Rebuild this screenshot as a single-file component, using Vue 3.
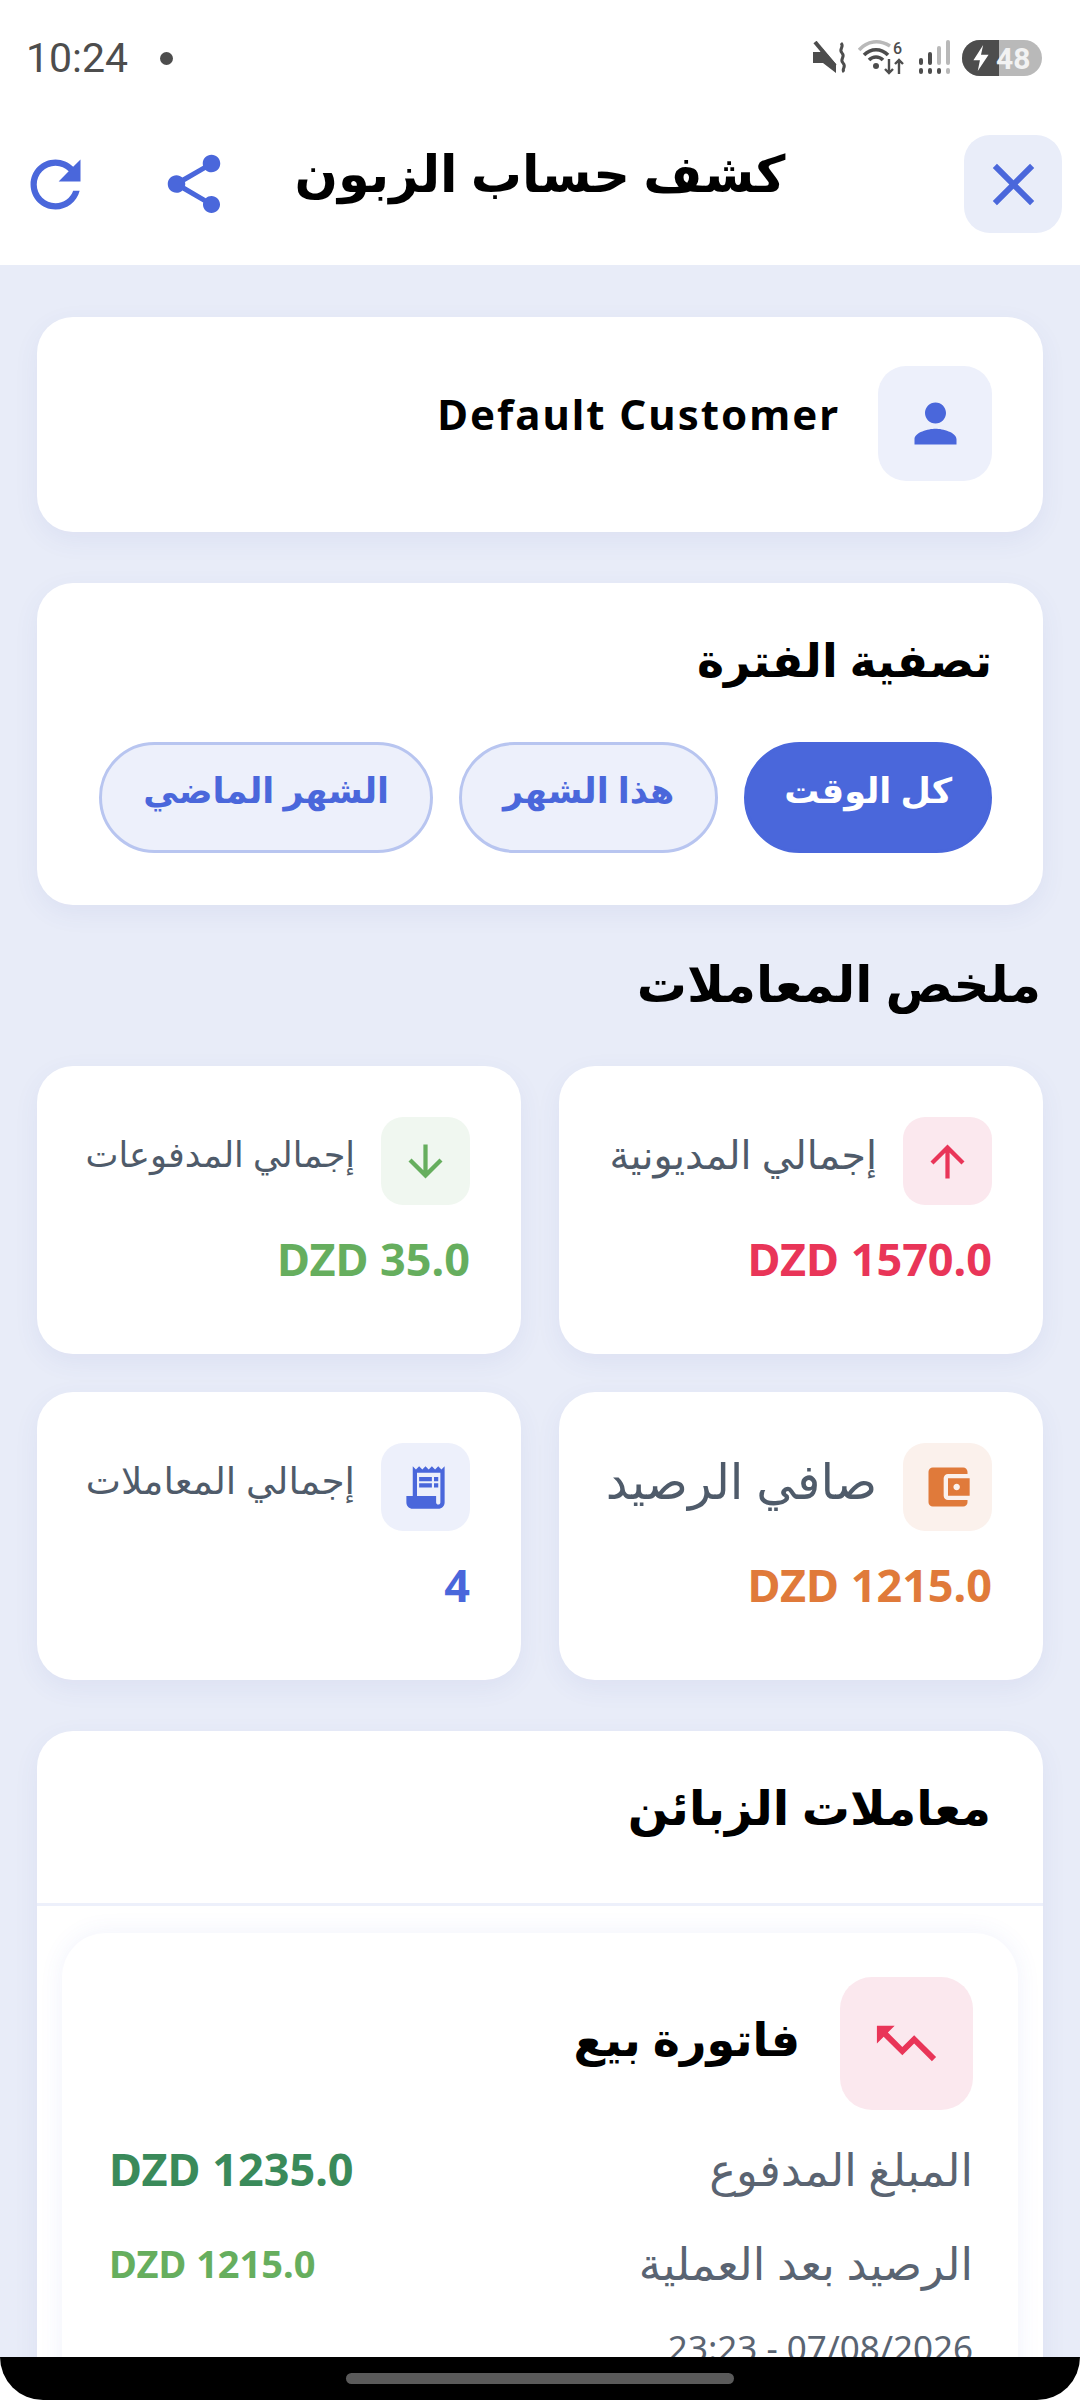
<template>
  <div class="screen" dir="rtl">
    <header class="top">
      <div class="status" dir="ltr">
        <div class="clock">
          <span>10:24</span>
          <i class="dot"></i>
        </div>
        <div class="status-icons">
          <svg width="36" height="34" viewBox="0 0 36 34" fill="#4d4d4d">
            <path d="M2 11h7l3-3 13 15v9L12 22H2z" />
            <path d="M4 1l20 24" stroke="#4d4d4d" stroke-width="4" />
            <path d="M30 2c4 4-3 6 1 10s-3 6 1 10-2 6 1 9" fill="none" stroke="#4d4d4d" stroke-width="3" />
          </svg>
          <svg width="50" height="38" viewBox="0 0 50 38" fill="none" stroke="#4d4d4d" stroke-width="3.6">
            <path d="M1 11C9 2 21 0 32 7" stroke="#b9b9b9" />
            <path d="M6 16c7-7 17-7 24 0M11 21c4-4 10-4 14 0" />
            <circle cx="18" cy="27" r="3" fill="#4d4d4d" stroke="none" />
            <path d="M31 20v14m-4-4 4 4 4-4M41 35V21m-4 4 4-4 4 4" stroke-width="2.4" />
            <text x="35" y="15" font-size="16" font-family="Roboto, sans-serif" font-weight="500" fill="#4d4d4d" stroke="none">6</text>
          </svg>
          <svg width="32" height="36" viewBox="0 0 32 36">
            <g fill="#4d4d4d">
              <rect x="0" y="18" width="4" height="7" rx="2" /><rect x="9" y="12" width="4" height="13" rx="2" />
              <rect x="0" y="28" width="4" height="6" rx="2" /><rect x="9" y="28" width="4" height="6" rx="2" /><rect x="18" y="28" width="4" height="6" rx="2" />
            </g>
            <g fill="#b9b9b9">
              <rect x="18" y="6" width="4" height="19" rx="2" /><rect x="27" y="0" width="4" height="25" rx="2" /><rect x="27" y="28" width="4" height="6" rx="2" />
            </g>
          </svg>
          <div class="battery">
            <div class="charge">
              <svg width="18" height="26" viewBox="0 0 16 24" fill="#fff"><path d="M10 0 1 14h6l-2 10 10-15H8z" /></svg>
            </div>
            <span>48</span>
          </div>
        </div>
      </div>
      <div class="appbar">
        <button class="close-btn">
          <svg width="71" height="71" viewBox="0 0 24 24"><path :d="icons.close" /></svg>
        </button>
        <h1>كشف حساب الزبون</h1>
        <div class="actions">
          <svg width="70" height="70" viewBox="0 0 24 24"><path :d="icons.share" /></svg>
          <svg width="75" height="75" viewBox="0 0 24 24"><path :d="icons.refresh" /></svg>
        </div>
      </div>
    </header>

    <main class="content">
      <section class="card customer">
        <div class="tile tile-lg blue">
          <svg width="63" height="63" viewBox="0 0 24 24"><path :d="icons.person" /></svg>
        </div>
        <div class="customer-name">Default Customer</div>
      </section>

      <section class="card filter">
        <h2>تصفية الفترة</h2>
        <div class="pills">
          <button v-for="(p, i) in periods" :key="p" class="pill" :class="{ active: i === 0 }">{{ p }}</button>
        </div>
      </section>

      <h2 class="section-title">ملخص المعاملات</h2>

      <div class="stats">
        <div v-for="s in stats" :key="s.label" class="card stat">
          <div class="stat-head">
            <div class="tile" :class="s.tone">
              <svg :width="s.size" :height="s.size" viewBox="0 0 24 24"><path :d="s.icon" /></svg>
            </div>
            <span class="stat-label" :style="{ fontSize: s.fit + 'px' }">{{ s.label }}</span>
          </div>
          <div class="stat-value" :class="s.tone" dir="ltr">{{ s.value }}</div>
        </div>
      </div>

      <section class="card history">
        <h2 class="history-title">معاملات الزبائن</h2>
        <div class="history-body">
          <article class="tx">
            <div class="tx-head">
              <div class="tile tile-xl red">
                <svg class="flip" width="71" height="71" viewBox="0 0 24 24"><path :d="icons.trending" /></svg>
              </div>
              <h3>فاتورة بيع</h3>
            </div>
            <div class="tx-row first">
              <span>المبلغ المدفوع</span>
              <b class="paid" dir="ltr">DZD 1235.0</b>
            </div>
            <div class="tx-row">
              <span>الرصيد بعد العملية</span>
              <b class="after" dir="ltr">DZD 1215.0</b>
            </div>
            <div class="tx-date" dir="ltr">23:23 - 07/08/2026</div>
          </article>
        </div>
      </section>
    </main>

    <div class="navbar">
      <div class="navbar-inner"><i></i></div>
    </div>
  </div>
</template>

<script setup>
const icons = {
  close: 'M19 6.41L17.59 5 12 10.59 6.41 5 5 6.41 10.59 12 5 17.59 6.41 19 12 13.41 17.59 19 19 17.59 13.41 12z',
  share: 'M18 16.08c-.76 0-1.44.3-1.96.77L8.91 12.7c.05-.23.09-.46.09-.7s-.04-.47-.09-.7l7.05-4.11c.54.5 1.25.81 2.04.81 1.66 0 3-1.34 3-3s-1.34-3-3-3-3 1.34-3 3c0 .24.04.47.09.7L8.04 9.81C7.5 9.31 6.79 9 6 9c-1.66 0-3 1.34-3 3s1.34 3 3 3c.79 0 1.5-.31 2.04-.81l7.12 4.16c-.05.21-.08.43-.08.65 0 1.61 1.31 2.92 2.92 2.92 1.61 0 2.92-1.31 2.92-2.92s-1.31-2.92-2.92-2.92z',
  refresh: 'M17.65 6.35C16.2 4.9 14.21 4 12 4c-4.42 0-7.99 3.58-7.99 8s3.57 8 7.99 8c3.73 0 6.84-2.55 7.73-6h-2.08c-.82 2.33-3.04 4-5.65 4-3.31 0-6-2.69-6-6s2.69-6 6-6c1.66 0 3.14.69 4.22 1.78L13 11h7V4l-2.35 2.35z',
  person: 'M12 12c2.21 0 4-1.79 4-4s-1.79-4-4-4-4 1.79-4 4 1.79 4 4 4zm0 2c-2.67 0-8 1.34-8 4v2h16v-2c0-2.66-5.33-4-8-4z',
  up: 'M4 12l1.41 1.41L11 7.83V20h2V7.83l5.58 5.59L20 12l-8-8-8 8z',
  down: 'M20 12l-1.41-1.41L13 16.17V4h-2v12.17l-5.58-5.59L4 12l8 8 8-8z',
  wallet: 'M21 18v1c0 1.1-.9 2-2 2H5c-1.11 0-2-.9-2-2V5c0-1.1.89-2 2-2h14c1.1 0 2 .9 2 2v1h-9c-1.11 0-2 .9-2 2v8c0 1.1.89 2 2 2h9zm-9-2h10V8H12v8zm4-2.5c-.83 0-1.5-.67-1.5-1.5s.67-1.5 1.5-1.5 1.5.67 1.5 1.5-.67 1.5-1.5 1.5z',
  receipt: 'M19.5 3.5L18 2l-1.5 1.5L15 2l-1.5 1.5L12 2l-1.5 1.5L9 2 7.5 3.5 6 2v14H3v3c0 1.66 1.34 3 3 3h12c1.66 0 3-1.34 3-3V2l-1.5 1.5zM19 19c0 .55-.45 1-1 1s-1-.45-1-1v-3H8V5h11v14zM9 7h6v2H9zm7 0h2v2h-2zm-7 3h6v2H9zm7 0h2v2h-2z',
  trending: 'M16 6l2.29 2.29-4.88 4.88-4-4L2 16.59 3.41 18l6-6 4 4 6.3-6.29L22 12V6z'
}

const periods = ['كل الوقت', 'هذا الشهر', 'الشهر الماضي']

// the labels are shrunk to fit one width, so each has its own font size
const stats = [
  { label: 'إجمالي المديونية', value: 'DZD 1570.0', tone: 'red', icon: icons.up, size: 51, fit: 39.5 },
  { label: 'إجمالي المدفوعات', value: 'DZD 35.0', tone: 'green', icon: icons.down, size: 51, fit: 35 },
  { label: 'صافي الرصيد', value: 'DZD 1215.0', tone: 'orange', icon: icons.wallet, size: 52, fit: 49 },
  { label: 'إجمالي المعاملات', value: '4', tone: 'blue', icon: icons.receipt, size: 51, fit: 37.4 }
]
</script>

<style>
html, body {
  margin: 0;
  background: #e8ecf8;
}
</style>

<style scoped>
.screen {
  position: relative;
  width: 1080px;
  height: 2400px;
  overflow: hidden;
  background: #e8ecf8;
  font-family: "Noto Sans", "DejaVu Sans", sans-serif;
  color: #000;
}

h1, h2, h3 {
  margin: 0;
  font-weight: 700;
}

.top {
  height: 265px;
  background: #fff;
}

.status {
  height: 90px;
  padding: 26px 38px 0 26px;
  box-sizing: border-box;
  display: flex;
  justify-content: space-between;
  align-items: center;
}

.clock {
  display: flex;
  align-items: center;
  gap: 32px;
  font-family: Roboto, sans-serif;
  font-size: 41px;
  color: #4d4d4d;
}

.dot {
  width: 13px;
  height: 13px;
  border-radius: 50%;
  background: #4d4d4d;
}

.status-icons {
  display: flex;
  align-items: center;
  gap: 11px;
}

.battery {
  display: flex;
  width: 80px;
  height: 36px;
  border-radius: 18px;
  overflow: hidden;
  background: #b9b9b9;
  align-items: center;
  font-family: Roboto, sans-serif;
  font-size: 30px;
  font-weight: 700;
  color: #f2f2f2;
}

.charge {
  width: 37px;
  height: 100%;
  background: #4d4d4d;
  display: flex;
  align-items: center;
  justify-content: center;
}

.battery span {
  margin-left: -3px;
}

.appbar {
  display: grid;
  grid-template-columns: 1fr auto 1fr;
  align-items: center;
  padding: 45px 18px 0;
}

.close-btn {
  width: 98px;
  height: 98px;
  padding: 0;
  border: 0;
  border-radius: 26px;
  background: #e9edf9;
  display: flex;
  align-items: center;
  justify-content: center;
}

.appbar svg {
  fill: #4a67db;
  display: block;
}

.appbar h1 {
  font-size: 51px;
  margin-bottom: 24px;
}

.actions {
  display: flex;
  align-items: center;
  justify-self: end;
  gap: 66px;
}

.content {
  padding: 52px 37px 0;
  display: flex;
  flex-direction: column;
}

.card {
  background: #fff;
  border-radius: 36px;
  box-shadow: 0 8px 26px rgba(70, 90, 170, 0.07);
}

.customer {
  height: 215px;
  box-sizing: border-box;
  padding: 49px 51px;
  display: flex;
  gap: 38px;
  margin-bottom: 51px;
}

.customer-name {
  font-size: 42px;
  font-weight: 700;
  letter-spacing: 2px;
  margin-top: 8px;
  line-height: 80px;
}

.tile {
  flex: none;
  width: 89px;
  height: 88px;
  border-radius: 22px;
  display: flex;
  align-items: center;
  justify-content: center;
}

.tile-lg {
  width: 114px;
  height: 115px;
  border-radius: 28px;
}

.tile-xl {
  width: 133px;
  height: 133px;
  border-radius: 32px;
}

.tile.blue { background: #edf0fb; }
.tile.red { background: #fbe8ee; }
.tile.green { background: #f0f7f0; }
.tile.orange { background: #fbf1ec; }

.tile.blue svg { fill: #4a67db; }
.tile.red svg { fill: #e93558; }
.tile.green svg { fill: #66ae5e; }
.tile.orange svg { fill: #e07a3a; }

.flip {
  transform: scaleX(-1);
}

.filter {
  height: 322px;
  box-sizing: border-box;
  padding: 41px 51px 0;
}

.filter h2 {
  font-size: 46px;
  line-height: 70px;
}

.pills {
  display: flex;
  gap: 26px;
  margin-top: 48px;
}

.pill {
  height: 111px;
  padding: 0 41px 16px;
  box-sizing: border-box;
  border: 3px solid #b8c5f0;
  border-radius: 56px;
  background: #edf0fb;
  color: #4a67db;
  font-family: inherit;
  font-size: 35px;
  font-weight: 700;
}

.pill.active {
  padding: 0 37px 16px;
  background: #4a67db;
  border-color: #4a67db;
  color: #fff;
}

.section-title {
  font-size: 50px;
  line-height: 70px;
  margin: 43px 2px 48px 0;
}

.stats {
  display: grid;
  grid-template-columns: 484px 484px;
  justify-content: space-between;
  gap: 38px;
  margin-bottom: 51px;
}

.stat {
  height: 288px;
  box-sizing: border-box;
  padding: 51px 51px 0;
}

.stat-head {
  display: flex;
  gap: 26px;
  align-items: flex-start;
  height: 88px;
}

.stat-label {
  line-height: 74px;
  color: #4f5b6a;
  white-space: nowrap;
}

.stat-value {
  margin-top: 27px;
  font-size: 45px;
  line-height: 54px;
  font-weight: 700;
  text-align: right;
}

.stat-value.red { color: #e93558; }
.stat-value.green { color: #66ae5e; }
.stat-value.orange { color: #e07a3a; }
.stat-value.blue { color: #4a67db; }

.history {
  overflow: hidden;
}

.history-title {
  height: 175px;
  box-sizing: border-box;
  padding: 41px 52px 0;
  font-size: 48px;
  line-height: 70px;
  border-bottom: 3px solid #edf0fb;
}

.history-body {
  padding: 27px 25px 60px;
  background: #fff;
}

.tx {
  padding: 44px 45px 60px 47px;
  background: #fff;
  border-radius: 44px;
  box-shadow: 0 0 24px rgba(70, 90, 200, 0.08);
}

.tx-head {
  display: flex;
  align-items: center;
  gap: 40px;
}

.tx-head h3 {
  font-size: 46px;
  margin-bottom: 12px;
}

.tx-row {
  display: flex;
  justify-content: space-between;
  align-items: center;
  height: 60px;
  margin-top: 34px;
  color: #5a6472;
  font-size: 45px;
  line-height: 60px;
}

.tx-row.first {
  margin-top: 29px;
}

.paid {
  font-size: 45px;
  color: #3a8a5a;
}

.after {
  font-size: 38px;
  color: #66ae5e;
}

.tx-date {
  margin-top: 33px;
  font-size: 35px;
  line-height: 44px;
  color: #5a6472;
  text-align: right;
}

.navbar {
  position: absolute;
  left: 0;
  right: 0;
  bottom: 0;
  height: 43px;
  background: #fff;
}

.navbar-inner {
  height: 100%;
  background: #000;
  border-radius: 0 0 45px 45px;
  display: flex;
  justify-content: center;
}

.navbar-inner i {
  width: 388px;
  height: 11px;
  margin-top: 16px;
  border-radius: 6px;
  background: #5a5a5a;
}
</style>
